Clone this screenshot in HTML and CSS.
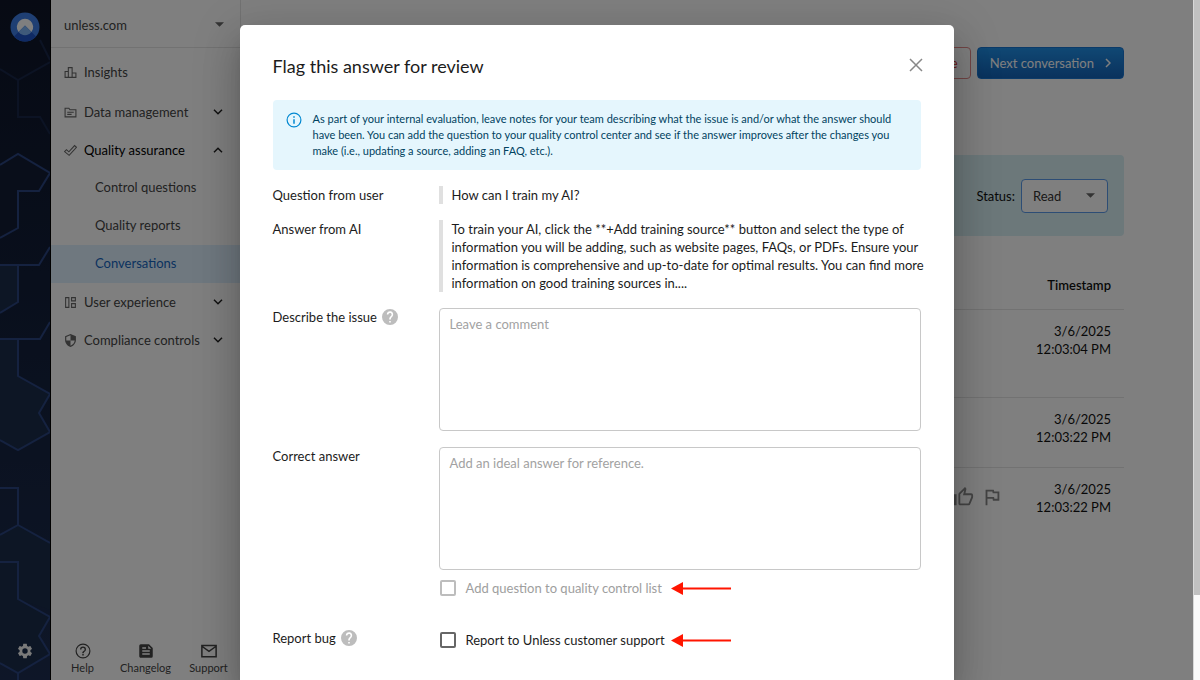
FILE: index.html
```html
<!DOCTYPE html>
<html lang="en">
<head>
    <meta charset="utf-8">
    <title>Conversations</title>
    <link rel="stylesheet" href="styles.css">
</head>
<body>
<div class="app">
    <aside class="rail">
        <svg class="rail-pattern" viewBox="0 0 50 680" preserveAspectRatio="xMinYMin slice">
            <path class="cell-a" d="M0 165 18 154 50 173 39 191 18 191 18 228 0 238z"/>
            <path class="cell-b" d="M0 265H18V302L0 313zM0 339H18V376L50 394 39 413 50 432 18 450 0 440z"/>
            <path class="cell-b" d="M0 562H18V599L50 617 39 636 50 654 18 673 0 663zM0 535 18 525 50 543V610L18 599V562H0z"/>
            <path class="faint" d="M0 69 18 80 50 62M18 80V117H40L50 134M40 40 50 60"/>
            <path class="line" d="M0 165 18 154 50 173 39 191H18V228L0 238M50 247 39 265H0M18 265V302L0 313M50 322 40 339H0M18 339V376L50 394 39 413 50 432 18 450 0 440"/>
            <path class="line" d="M0 488H18V525L0 535M18 525 50 543M0 562H18V599L50 617 39 636 50 654 18 673 0 663M18 673V680"/>
        </svg>
        <svg class="logo" viewBox="0 0 30 30">
            <circle cx="15" cy="15" r="14.5" fill="#3f7fe6"/>
            <path d="M4 24.500 15 13.500 26 24.500A14.500 14.500 0 0 1 4 24.500z" fill="#1f55c8"/>
            <path d="M8.500 20A8.200 8.200 0 1 1 21.500 20L15 13.500z" fill="#fff"/>
            <path d="M8.500 20 15 13.500 21.500 20A8.200 8.200 0 0 1 8.500 20z" fill="#7fb4f5"/>
        </svg>
        <button class="icon-btn gear" aria-label="Settings">
            <svg viewBox="0 0 24 24"><path d="M19.140 12.940c.04-.3.06-.61.06-.94s-.02-.64-.07-.94l2.030-1.580c.18-.14.23-.41.12-.61l-1.920-3.320c-.12-.22-.37-.29-.59-.22l-2.390.96c-.5-.38-1.030-.7-1.620-.94l-.36-2.540c-.04-.24-.24-.41-.48-.41h-3.840c-.24 0-.43.17-.47.41l-.36 2.540c-.59.24-1.130.57-1.620.94l-2.390-.96c-.22-.08-.47 0-.59.22L2.740 8.870c-.12.21-.08.47.12.61l2.030 1.580c-.05.3-.09.63-.09.94s.02.64.07.94l-2.030 1.580c-.18.14-.23.41-.12.61l1.920 3.320c.12.22.37.29.59.22l2.390-.96c.5.38 1.030.7 1.620.94l.36 2.540c.05.24.24.41.48.41h3.840c.24 0 .44-.17.47-.41l.36-2.540c.59-.24 1.130-.56 1.620-.94l2.390.96c.22.08.47 0 .59-.22l1.920-3.320c.12-.22.07-.47-.12-.61zM12 15.600a3.600 3.600 0 1 1 0-7.200 3.600 3.600 0 0 1 0 7.200z"/></svg>
        </button>
    </aside>

    <div class="sidebar">
        <div class="site">
            <select class="site-select" aria-label="Site"><option>unless.com</option></select>
            <svg class="caret" viewBox="0 0 10 5"><path d="M0 0h10L5 5z"/></svg>
        </div>
        <nav class="nav">
            <a class="nav-item first" href="#">
                <svg class="nav-icon" viewBox="0 0 24 24"><path class="o" d="M2 10h6v11H2zM8 3h7v18H8zM15 13h7v8h-7z"/></svg>
                <span>Insights</span>
            </a>
            <a class="nav-item" href="#">
                <svg class="nav-icon" viewBox="0 0 24 24"><path class="o" d="M2 4h7l2 3h11v13H2zM6 11.500h12M6 15.500h8"/></svg>
                <span>Data management</span>
                <svg class="chevron" viewBox="0 0 10 6"><path d="M1 .8 5 4.800 9 .8"/></svg>
            </a>
            <a class="nav-item open" href="#">
                <svg class="nav-icon" viewBox="0 0 24 24"><path class="o" d="M1 14 4.500 10.500 9 14.500 19.500 3 23 6 9.500 21z"/></svg>
                <span>Quality assurance</span>
                <svg class="chevron" viewBox="0 0 10 6"><path d="M1 5.200 5 1.200 9 5.200"/></svg>
            </a>
            <a class="nav-item sub" href="#">Control questions</a>
            <a class="nav-item sub" href="#">Quality reports</a>
            <a class="nav-item sub active" href="#">Conversations</a>
            <a class="nav-item" href="#">
                <svg class="nav-icon" viewBox="0 0 24 24"><path class="o" d="M3 3h6v18H3zM14 3h7v6h-7zM14 14h7v7h-7z"/></svg>
                <span>User experience</span>
                <svg class="chevron" viewBox="0 0 10 6"><path d="M1 .8 5 4.800 9 .8"/></svg>
            </a>
            <a class="nav-item" href="#">
                <svg class="nav-icon" viewBox="0 0 24 24"><path d="M12 0 2 4v7c0 6 4.300 11 10 13 5.700-2 10-7 10-13V4zm0 2.500V12h7.800c-.6 4.300-3.600 8-7.800 9.500V12H4.200V5.500z"/></svg>
                <span>Compliance controls</span>
                <svg class="chevron" viewBox="0 0 10 6"><path d="M1 .8 5 4.800 9 .8"/></svg>
            </a>
        </nav>
        <div class="side-footer">
            <a href="#">
                <svg viewBox="0 0 24 24"><path d="M11 18h2v-2h-2v2zm1-16a10 10 0 1 0 0 20 10 10 0 0 0 0-20zm0 18.400a8.400 8.400 0 1 1 0-16.800 8.400 8.400 0 0 1 0 16.800zM12 6a4 4 0 0 0-4 4h1.800a2.200 2.200 0 0 1 4.400 0c0 2-3.200 1.750-3.200 5h2c0-2.250 3-2.500 3-5a4 4 0 0 0-4-4z"/></svg>
                Help
            </a>
            <a href="#">
                <svg viewBox="0 0 24 24"><path d="M16 3H5a2 2 0 0 0-2 2v14c0 1.100.9 2 2 2h14a2 2 0 0 0 2-2V8zM7 7h5v2H7zm10 10H7v-2h10zm0-4H7v-2h10zm-2-4V5l4 4z"/></svg>
                Changelog
            </a>
            <a href="#">
                <svg viewBox="0 0 24 24"><path class="o" d="M2.500 4.500h19v15h-19zM3 6l9 6.500L21 6"/></svg>
                Support
            </a>
        </div>
    </div>

    <main class="main">
        <div class="toolbar">
            <button class="btn btn-danger">e</button>
            <button class="btn btn-primary">Next conversation
                <svg class="arrow" viewBox="0 0 6 10"><path d="M1 1 5 5 1 9"/></svg>
            </button>
        </div>
        <div class="status-bar">
            <label for="status">Status:</label>
            <div class="status-box">
                <select id="status"><option>Read</option></select>
                <svg class="caret" viewBox="0 0 10 5"><path d="M0 0h10L5 5z"/></svg>
            </div>
        </div>
        <table class="messages">
            <thead>
                <tr><th></th><th class="time">Timestamp</th></tr>
            </thead>
            <tbody>
                <tr class="tall"><td></td><td class="time">3/6/2025<br>12:03:04 PM</td></tr>
                <tr><td></td><td class="time">3/6/2025<br>12:03:22 PM</td></tr>
                <tr class="last">
                    <td>
                        <div class="actions">
                            <button class="icon-btn" aria-label="Good answer">
                                <svg viewBox="0 0 24 24"><path d="M9 21h9c.83 0 1.540-.5 1.840-1.220l3.020-7.050c.09-.23.14-.47.14-.73v-2a2 2 0 0 0-2-2h-6.310l.95-4.570.03-.32c0-.41-.17-.79-.44-1.060L14.170 1 7.580 7.590C7.220 7.950 7 8.450 7 9v10c0 1.100.9 2 2 2zM9 9l4.340-4.340L12 10h9v2l-3 7H9V9zM1 9h4v12H1z"/></svg>
                            </button>
                            <button class="icon-btn" aria-label="Flag answer">
                                <svg viewBox="0 0 24 24"><path d="m12.360 6 .4 2H18v6h-3.360l-.4-2H7V6h5.360M14 4H5v17h2v-7h5.600l.4 2h7V6h-5.600L14 4z"/></svg>
                            </button>
                        </div>
                    </td>
                    <td class="time">3/6/2025<br>12:03:22 PM</td>
                </tr>
            </tbody>
        </table>
    </main>

    <div class="overlay">
        <div class="modal" role="dialog" aria-labelledby="modal-title">
            <div class="modal-header">
                <h1 id="modal-title">Flag this answer for review</h1>
                <button class="icon-btn close" aria-label="Close">
                    <svg viewBox="0 0 14 14"><path d="M1 1 13 13M13 1 1 13"/></svg>
                </button>
            </div>
            <div class="info">
                <svg viewBox="0 0 24 24"><path d="M11 7h2v2h-2zm0 4h2v6h-2zm1-9a10 10 0 1 0 0 20 10 10 0 0 0 0-20zm0 18.400a8.400 8.400 0 1 1 0-16.800 8.400 8.400 0 0 1 0 16.800z"/></svg>
                <p>As part of your internal evaluation, leave notes for your team describing what the issue is and/or what the answer should have been. You can add the question to your quality control center and see if the answer improves after the changes you make (i.e., updating a source, adding an FAQ, etc.).</p>
            </div>
            <form class="form">
                <div class="label">Question from user</div>
                <div class="quote">How can I train my AI?</div>

                <div class="label">Answer from AI</div>
                <div class="quote">To train your AI, click the **+Add training source** button and select the type of information you will be adding, such as website pages, FAQs, or PDFs. Ensure your information is comprehensive and up-to-date for optimal results. You can find more information on good training sources in....</div>

                <div class="label">
                    <label for="issue">Describe the issue</label>
                    <svg class="help" viewBox="2 2 20 20"><path d="M12 2a10 10 0 1 0 0 20 10 10 0 0 0 0-20zm1 17h-2v-2h2zm2.070-7.750-.9.920C13.450 12.900 13 13.500 13 15h-2v-.5c0-1.100.45-2.100 1.170-2.830l1.240-1.260A2 2 0 1 0 10 9H8a4 4 0 1 1 7.070 2.250z"/></svg>
                </div>
                <textarea id="issue" placeholder="Leave a comment"></textarea>

                <div class="label"><label for="correct">Correct answer</label></div>
                <div>
                    <textarea id="correct" placeholder="Add an ideal answer for reference."></textarea>
                    <div class="check disabled">
                        <input type="checkbox" id="quality" disabled>
                        <label for="quality">Add question to quality control list</label>
                        <svg class="pointer" viewBox="0 0 60 13"><path d="M0 6.500 12 0v13z"/><path d="M11 5.500h49v2H11z"/></svg>
                    </div>
                </div>

                <div class="label report">
                    <span>Report bug</span>
                    <svg class="help" viewBox="2 2 20 20"><path d="M12 2a10 10 0 1 0 0 20 10 10 0 0 0 0-20zm1 17h-2v-2h2zm2.070-7.750-.9.920C13.450 12.900 13 13.500 13 15h-2v-.5c0-1.100.45-2.100 1.170-2.830l1.240-1.260A2 2 0 1 0 10 9H8a4 4 0 1 1 7.070 2.250z"/></svg>
                </div>
                <div class="check report">
                    <input type="checkbox" id="report">
                    <label for="report">Report to Unless customer support</label>
                    <svg class="pointer" viewBox="0 0 60 13"><path d="M0 6.500 12 0v13z"/><path d="M11 5.500h49v2H11z"/></svg>
                </div>
            </form>
        </div>
    </div>
</div>
<div class="scrollbar"><div class="thumb"></div></div>
</body>
</html>
```
FILE: styles.css
```css
* {
    box-sizing: border-box;
}

body {
    margin: 0;
    height: 100vh;
    display: flex;
    overflow: hidden;
    background: #fff;
    color: #111;
    font: 13px/18px Lato, "Liberation Sans", sans-serif;
}

button, select, textarea {
    font: inherit;
    color: inherit;
}

select {
    appearance: none;
    border: none;
    background: none;
    padding: 0;
    width: 100%;
}

a {
    color: inherit;
    text-decoration: none;
}

svg {
    display: block;
    flex: none;
    fill: currentColor;
}

.o {
    fill: none;
    stroke: currentColor;
    stroke-width: 2;
}

.icon-btn {
    border: none;
    background: none;
    padding: 0;
    cursor: pointer;
}

.app {
    position: relative;
    flex: 1;
    display: flex;
    min-width: 0;
    overflow: hidden;
}

/* dark rail */
.rail {
    position: relative;
    width: 51px;
    border-right: 1px solid #000;
    background: linear-gradient(#0e1528, #121e38 40%, #1d2d50);
    display: flex;
    flex-direction: column;
    align-items: center;
    justify-content: space-between;
    padding: 12px 0 20px;
}

.rail-pattern {
    position: absolute;
    left: 0;
    top: 0;
    width: 50px;
    height: 100%;
}

.rail-pattern path {
    fill: none;
}

.rail-pattern .line {
    stroke: #2a4480;
    stroke-width: 2;
}

.rail-pattern .faint {
    stroke: #182748;
    stroke-width: 2;
}

.rail-pattern .cell-a {
    fill: #131d34;
}

.rail-pattern .cell-b {
    fill: #1a2c4a;
}

.logo {
    position: relative;
    width: 30px;
    height: 30px;
}

.gear {
    position: relative;
    color: #f4f4f4;
}

.gear svg {
    width: 18px;
    height: 18px;
}

/* sidebar */
.sidebar {
    width: 190px;
    border-right: 1px solid #e4e4e4;
    display: flex;
    flex-direction: column;
    color: #444;
}

.site {
    height: 48px;
    padding: 2px 16px 0 13px;
    border-bottom: 1px solid #e4e4e4;
    display: flex;
    align-items: center;
}

.caret {
    width: 9px;
    height: 5px;
    color: #666;
}

.nav {
    flex: 1;
    padding-top: 5px;
}

.nav-item {
    height: 38px;
    padding: 0 17px 0 13px;
    display: flex;
    align-items: center;
    gap: 7px;
}

.nav-item.first {
    margin-bottom: 2px;
}

.nav-item.open {
    color: #000;
}

.nav-item.sub {
    padding-left: 44px;
    padding-bottom: 2px;
}

.nav-item.active {
    background: #dff1ff;
    color: #1565c0;
}

.nav-icon {
    width: 13px;
    height: 13px;
    color: #666;
}

.chevron {
    width: 10px;
    height: 6px;
    margin-left: auto;
    fill: none;
    stroke: #222;
    stroke-width: 1.5;
}

.side-footer {
    display: grid;
    grid-template-columns: repeat(3, 1fr);
    padding-bottom: 4px;
    font-size: 11px;
    line-height: 16px;
}

.side-footer a {
    display: flex;
    flex-direction: column;
    align-items: center;
}

.side-footer svg {
    width: 18px;
    height: 18px;
}

/* conversation page behind the dialog */
.main {
    flex: 1;
    padding: 47px 69px 0 33px;
}

.toolbar {
    display: flex;
    justify-content: flex-end;
    gap: 6px;
}

.btn {
    height: 32px;
    border-radius: 4px;
    padding: 0 12px;
    display: flex;
    align-items: center;
    gap: 11px;
}

.btn-danger {
    border: 1px solid #e58a8a;
    background: none;
    color: #d32f2f;
}

.btn-primary {
    border: 1px solid #1976d2;
    background: linear-gradient(#2090e8, #1464ba);
    color: #fff;
}

.arrow {
    width: 6px;
    height: 10px;
    fill: none;
    stroke: #fff;
    stroke-width: 1.5;
}

.status-bar {
    margin-top: 76px;
    height: 81px;
    padding-right: 16px;
    border-radius: 4px;
    background: #d8f0f4;
    display: flex;
    align-items: center;
    justify-content: flex-end;
    gap: 6px;
}

.status-box {
    width: 87px;
    height: 34px;
    padding: 0 12px 0 11px;
    border: 1px solid #5b9bea;
    border-radius: 4px;
    background: #fff;
    display: flex;
    align-items: center;
    color: #333;
}

.messages {
    width: 100%;
    margin-top: 26px;
    border-collapse: collapse;
}

.messages th, .messages td {
    padding: 12px 0;
    border-bottom: 1px solid #e4e4e4;
    vertical-align: top;
}

.messages th {
    height: 47px;
    padding: 14px 0;
    font-weight: 600;
}

.messages .time {
    width: 121px;
    padding-right: 13px;
    text-align: right;
}

.messages .tall td {
    height: 88px;
}

.messages td {
    height: 70px;
}

.messages .last td {
    height: 60px;
    border-bottom: none;
}

.actions {
    display: flex;
    justify-content: flex-end;
    gap: 7px;
    padding-top: 6px;
    color: #888;
}

.actions svg {
    width: 22px;
    height: 22px;
}

/* dialog */
.overlay {
    position: absolute;
    inset: 0;
    background: rgba(0, 0, 0, 0.5);
    padding-top: 25px;
    display: flex;
    justify-content: center;
}

.modal {
    width: 100%;
    max-width: 714px;
    padding: 31px 33px;
    border-radius: 5px 5px 0 0;
    background: #fff;
    color: #1c1c1c;
    box-shadow: 0 11px 15px -7px rgba(0, 0, 0, 0.2), 0 24px 38px 3px rgba(0, 0, 0, 0.14), 0 9px 46px 8px rgba(0, 0, 0, 0.12);
}

.modal-header {
    display: flex;
    align-items: flex-start;
    justify-content: space-between;
}

.modal h1 {
    margin: 0;
    font-size: 18px;
    line-height: 20px;
    font-weight: 400;
}

.close {
    padding-top: 2px;
}

.close svg {
    width: 14px;
    height: 14px;
    margin-right: -2px;
    fill: none;
    stroke: #888;
    stroke-width: 1.5;
}

.info {
    margin: 24px 0 16px;
    padding: 11px 12px;
    border-radius: 4px;
    background: #e5f6fd;
    color: #014361;
    font-size: 11px;
    line-height: 16px;
    display: flex;
    gap: 10px;
}

.info svg {
    width: 18px;
    height: 18px;
    color: #0288d1;
}

.info p {
    margin: 0;
}

.form {
    display: grid;
    grid-template-columns: 150px 1fr;
    gap: 16px;
}

.label {
    display: flex;
    gap: 5px;
    height: 18px;
    align-items: center;
}

.help {
    width: 16px;
    height: 16px;
    color: #bdbdbd;
}

.quote {
    border-left: 4px solid #e0e0e0;
    padding-left: 9px;
    margin-right: -12px;
}

textarea {
    display: block;
    width: 100%;
    height: 123px;
    padding: 6px 10px;
    border: 1px solid #c8c8c8;
    border-radius: 4px;
    resize: none;
}

textarea::placeholder {
    color: #a2a2a2;
}

.check {
    display: flex;
    align-items: center;
    height: 18px;
    margin-top: 9px;
    padding-left: 1px;
}

.check input {
    appearance: none;
    width: 16px;
    height: 16px;
    margin: 0 10px 0 0;
    border: 2px solid #666;
    border-radius: 2px;
}

.check label {
    width: 205px;
}

.check.disabled label {
    color: #9e9e9e;
}

.check.disabled input {
    border-color: #bdbdbd;
}

.report {
    margin-top: 16px;
}

.check.report {
    margin-top: 18px;
}

.pointer {
    width: 60px;
    height: 13px;
    color: #ff1500;
}

/* page scrollbar */
.scrollbar {
    width: 7px;
    background: #fafafa;
    border-left: 1px solid #d8d8d8;
}

.thumb {
    height: 87.5%;
    background: #c1c1c1;
}
```
